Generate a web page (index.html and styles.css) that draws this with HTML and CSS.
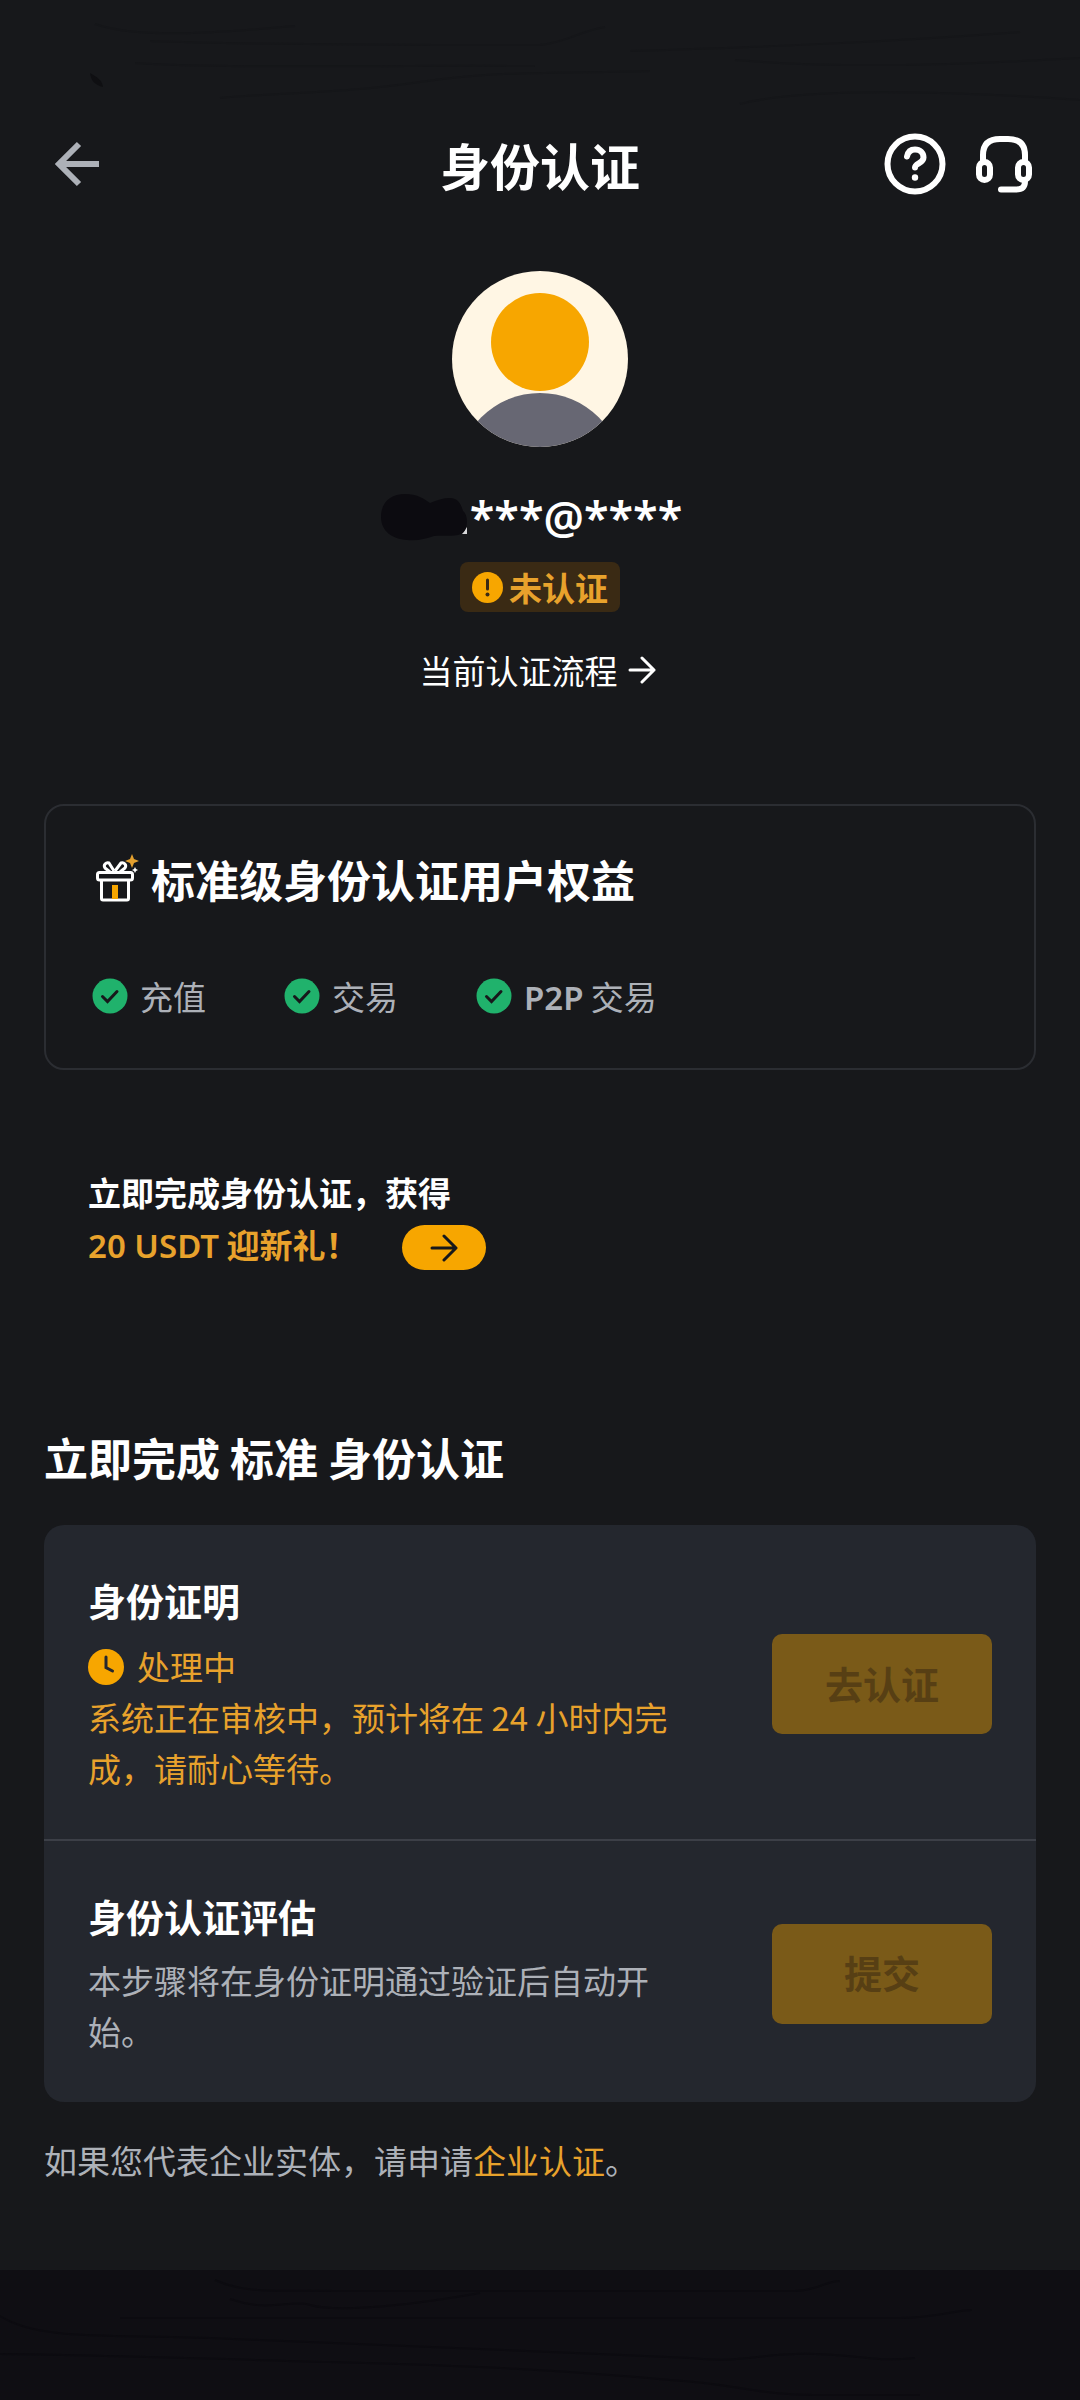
FILE: index.html
```html
<!DOCTYPE html>
<html lang="zh-CN">
<head>
<meta charset="utf-8">
<meta name="viewport" content="width=device-width, initial-scale=1">
<title>身份认证</title>
<link rel="stylesheet" href="styles.css">
</head>
<body>
<div class="status-area">
  <svg viewBox="0 0 1080 108" preserveAspectRatio="none" fill="none" stroke="#151619" stroke-width="2" aria-hidden="true"><path d="M95 24c40 14 110 10 200 2M150 41c100 4 260 4 390 4 25-2 40-14 65-18M135 63c100 6 240 2 400 3M220 98c60-6 120-4 200-16s130-8 230-11M630 51c130-4 240-8 390-19M735 60c100 8 200 6 345-2M740 104c60-16 200-14 340-4"/><path d="M90 73c1 8 5 12 13 14-1-7-6-10-13-14z" fill="#0f0f12" stroke="none"/></svg>
</div>
<header class="topbar">
  <button class="icon-btn" type="button" aria-label="返回">
    <svg width="60" height="60" viewBox="0 0 60 60" fill="none" stroke="#adb1b8" stroke-width="6"><path d="M51 30H11M31 10L11 30l20 20"/></svg>
  </button>
  <h1 class="page-title">身份认证</h1>
  <div class="actions">
    <button class="icon-btn" type="button" aria-label="帮助">
      <svg width="62" height="62" viewBox="0 0 62 62" fill="none" stroke="#fff" stroke-width="6" stroke-linecap="round"><circle cx="31" cy="31" r="27.500"/><path d="M23 23.500c1-5 4-7 8-7 5 0 8.500 3 8.500 8 0 6-8.500 5.500-8.500 10"/><circle cx="31" cy="44.500" r="3.200" fill="#fff" stroke="none"/></svg>
    </button>
    <button class="icon-btn" type="button" aria-label="客服">
      <svg width="56" height="62" viewBox="0 0 56 62" fill="none" stroke="#fff" stroke-width="6" stroke-linecap="round"><path d="M7 29V22C7 10 14 6 24 6h8c10 0 17 4 17 16v7M49 48c0 7-4 8.500-9 8.500H25"/><rect x="3" y="29" width="11" height="18" rx="5.500"/><rect x="42" y="29" width="11" height="18" rx="5.500"/></svg>
    </button>
  </div>
</header>

<main class="content">
  <section class="profile">
    <svg class="avatar" viewBox="0 0 176 176" aria-hidden="true">
      <defs><clipPath id="face"><circle cx="88" cy="88" r="88"/></clipPath></defs>
      <g clip-path="url(#face)"><rect width="176" height="176" fill="#fff6e4"/><circle cx="88" cy="205" r="83" fill="#676773"/></g>
      <circle cx="88" cy="71" r="49" fill="#f7a600"/>
    </svg>
    <p class="account">
      <svg width="90" height="48" viewBox="0 0 90 48" aria-hidden="true"><path d="M82 41h5v-7z" fill="#d8d8da"/><path d="M25 1c12 0 18 4 25 9 7-3 13-5 20-5 8 0 11 6 13 13 6 4 5 21-2 23-8 3-18 1-27 2-9 3-16 5-27 4C12 46 1 38 1 24 1 9 11 1 25 1z" fill="#0c0b10"/></svg>
      <span>***@****</span>
    </p>
    <p class="badge">
      <svg width="31" height="31" viewBox="0 0 31 31" aria-hidden="true"><circle cx="15.500" cy="15.500" r="15.500" fill="#f7a600"/><path d="M15.500 8v9" stroke="#3a2a14" stroke-width="3" stroke-linecap="round"/><circle cx="15.500" cy="22.500" r="2" fill="#3a2a14"/></svg>
      未认证
    </p>
    <a class="flow-link" href="#flow">当前认证流程
      <svg width="28" height="28" viewBox="0 0 28 28" fill="none" stroke="#fff" stroke-width="3" stroke-linecap="round" stroke-linejoin="round" aria-hidden="true"><path d="M2 14h24M14 2l12 12L14 26"/></svg>
    </a>
  </section>

  <section class="benefits">
    <h2 class="heading">
      <svg width="44" height="50" viewBox="0 0 44 50" fill="none" stroke="#fff" stroke-width="3" stroke-linejoin="round" aria-hidden="true"><rect x="2.500" y="18.500" width="35" height="7.500" rx="2"/><path d="M6.500 26v18.500q0 1.500 1.500 1.500h24q1.500 0 1.500-1.500V26"/><path d="M15 18l-5-4c-2-3 1-6 4-5l5 8M25 18l5-4c2-3-1-6-4-5l-6 8"/><rect x="17" y="31" width="6" height="14" fill="#f7a600" stroke="none"/><path d="M37 0l2 5 5 2-5 2-2 5-2-5-5-2 5-2z" fill="#e3a02f" stroke="none"/><path d="M40 13l1 2 2 1-2 1-1 2-1-2-2-1 2-1z" fill="#fff" stroke="none"/></svg>
      标准级身份认证用户权益
    </h2>
    <ul class="benefit-list">
      <li><svg width="36" height="36" viewBox="0 0 36 36" aria-hidden="true"><circle cx="18" cy="18" r="17.500" fill="#20b26c"/><path d="M10.500 18.500l5 5 9.500-10" fill="none" stroke="#17181b" stroke-width="3" stroke-linecap="round"/></svg>充值</li>
      <li><svg width="36" height="36" viewBox="0 0 36 36" aria-hidden="true"><circle cx="18" cy="18" r="17.500" fill="#20b26c"/><path d="M10.500 18.500l5 5 9.500-10" fill="none" stroke="#17181b" stroke-width="3" stroke-linecap="round"/></svg>交易</li>
      <li><svg width="36" height="36" viewBox="0 0 36 36" aria-hidden="true"><circle cx="18" cy="18" r="17.500" fill="#20b26c"/><path d="M10.500 18.500l5 5 9.500-10" fill="none" stroke="#17181b" stroke-width="3" stroke-linecap="round"/></svg><span><span class="latin">P2P</span> 交易</span></li>
    </ul>
  </section>

  <section class="promo">
    <p>立即完成身份认证，获得</p>
    <div class="promo-row">
      <p class="accent"><span class="latin">20 USDT</span> 迎新礼！</p>
      <button class="pill" type="button" aria-label="领取新礼">
        <svg width="28" height="28" viewBox="0 0 28 28" fill="none" stroke="#17181b" stroke-width="3" stroke-linecap="round" stroke-linejoin="round"><path d="M2 14h23M14 2l12 12L14 26"/></svg>
      </button>
    </div>
  </section>

  <h2 class="heading section-title">立即完成 标准 身份认证</h2>
  <section class="steps">
    <article class="step">
      <div class="step-text">
        <h3>身份证明</h3>
        <p class="status">
          <svg width="36" height="36" viewBox="0 0 36 36" aria-hidden="true"><circle cx="18" cy="18" r="18" fill="#f7a600"/><path d="M18 8v10.500l6.500 3.500" fill="none" stroke="#24272e" stroke-width="3" stroke-linecap="round"/></svg>
          处理中
        </p>
        <p class="pending">系统正在审核中，预计将在 24 小时内完成，请耐心等待。</p>
      </div>
      <button class="cta" type="button" disabled>去认证</button>
    </article>
    <article class="step">
      <div class="step-text">
        <h3>身份认证评估</h3>
        <p>本步骤将在身份证明通过验证后自动开始。</p>
      </div>
      <button class="cta" type="button" disabled>提交</button>
    </article>
  </section>
  <p class="note">如果您代表企业实体，请申请<a href="#business">企业认证</a>。</p>
</main>

<footer class="bottom">
  <svg viewBox="0 0 1080 129" preserveAspectRatio="none" fill="none" stroke="#0c0b10" stroke-width="2" aria-hidden="true"><path d="M215 10c30 14 60 10 120 11h460c25-1 30-10 45-10M230 29c40 14 60 0 80 6s80 4 170-12M120 48h780c35 0 55-8 72-8M0 46c40 25 110 18 210 22s300 12 480 20c60 6 70-6 125-4s60 8 100 4M0 84c60 0 180 4 330 8s230 8 340 18c70 4 90 16 150 15h100"/></svg>
</footer>
</body>
</html>
```

FILE: styles.css
```css
* { box-sizing: border-box; }

body {
  margin: 0;
  min-height: 100vh;
  display: flex;
  flex-direction: column;
  background: #17181b;
  color: #fff;
  font-family: "Noto Sans CJK SC", "Noto Sans", sans-serif;
  font-size: 33px;
  line-height: 52px;
}

h1, h2, h3, p, ul { margin: 0; padding: 0; }
svg { display: block; flex: none; }
button { font: inherit; border: 0; padding: 0; cursor: pointer; }

.status-area svg { width: 100%; height: 108px; }

.topbar {
  display: grid;
  grid-template-columns: 1fr auto 1fr;
  align-items: center;
  padding: 24px 48px;
}
.icon-btn { background: none; }
.page-title { font-size: 50px; line-height: 64px; }
.actions { display: flex; justify-content: flex-end; gap: 30px; }

.content { padding: 0 44px 84px; }

.profile {
  display: flex;
  flex-direction: column;
  align-items: center;
  padding-top: 51px;
}
.avatar { width: 176px; height: 176px; }
.account {
  display: flex;
  align-items: center;
  margin-top: 40px;
  padding-right: 18px;
  font: 600 45px/60px "Noto Sans", sans-serif;
}
.badge {
  display: flex;
  align-items: center;
  gap: 6px;
  height: 50px;
  margin-top: 15px;
  padding: 0 12px;
  border-radius: 8px;
  background: #3a2a14;
  color: #e8a22c;
  font-weight: 700;
}
.flow-link {
  display: flex;
  align-items: center;
  gap: 10px;
  margin-top: 32px;
  padding-right: 5px;
  color: #fff;
  text-decoration: none;
}

.heading { font-size: 44px; line-height: 60px; }

.benefits {
  margin-top: 108px;
  padding: 43px 46px;
  border: 2px solid #2b2d32;
  border-radius: 20px;
}
.benefits .heading { display: flex; align-items: center; gap: 12px; padding-left: 3px; }
.benefit-list {
  display: flex;
  gap: 78px;
  margin-top: 61px;
  padding-bottom: 3px;
  list-style: none;
  color: #adb1b8;
}
.benefit-list li { display: flex; align-items: center; gap: 12px; }
.latin { font-family: "Noto Sans", sans-serif; font-weight: 600; line-height: 1; }

.promo {
  margin-top: 96px;
  padding-left: 44px;
  font-weight: 700;
}
.promo-row { display: flex; align-items: flex-end; gap: 43px; }
.accent { color: #e8a22c; }
.pill {
  display: grid;
  place-items: center;
  width: 84px;
  height: 45px;
  border-radius: 23px;
  background: #f7a600;
}

.section-title { margin-top: 157px; }

.steps {
  margin-top: 38px;
  border-radius: 20px;
  background: #24272e;
  color: #adb1b8;
}
.step {
  display: flex;
  align-items: center;
  justify-content: space-between;
  gap: 72px;
  padding: 49px 44px 45px;
  line-height: 51px;
}
.step + .step { border-top: 2px solid #3c3f47; }
.step-text { flex: 1; }
.step h3 { margin-bottom: 13px; color: #fff; font-size: 38px; line-height: 52px; }
.status { display: flex; align-items: center; gap: 13px; padding-top: 2px; }
.status, .pending { color: #e8a22c; }
.cta {
  width: 220px;
  height: 100px;
  padding-bottom: 4px;
  border-radius: 10px;
  background: #7a5a18;
  color: #573f14;
  font-size: 38px;
  font-weight: 700;
  cursor: default;
}

.note { margin-top: 32px; color: #adb1b8; }
.note a { color: #e8a22c; text-decoration: none; }

.bottom { flex: 1; min-height: 129px; background: #0f0e13; }
.bottom svg { width: 100%; height: 129px; }
```
